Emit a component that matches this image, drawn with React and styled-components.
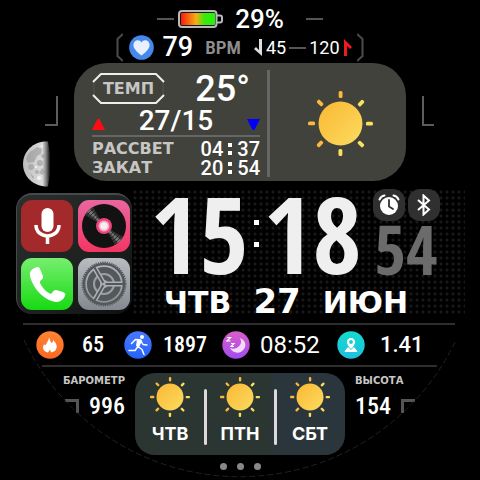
import React from "react";
import styled, { createGlobalStyle } from "styled-components";

const GlobalStyle = createGlobalStyle`
  * { box-sizing: border-box; }
  body { margin: 0; background: #000; }
  button { border: 0; padding: 0; cursor: pointer; font: inherit; color: inherit; }
  svg { display: block; flex: none; }
`;

const Face = styled.main`
  position: relative;
  display: flex;
  flex-direction: column;
  width: 100%;
  max-width: 560px;
  min-height: 100vh;
  margin: 0 auto;
  padding-top: 6px;
  overflow: hidden;
  color: #fff;
  font-family: Roboto, "Liberation Sans", sans-serif;
`;

const Rim = styled.svg`
  position: absolute;
  inset: 0;
  width: 100%;
  height: 100%;
  pointer-events: none;
`;

const Value = styled.span`
  font-family: ${(p) => (p.$narrow ? '"Roboto Condensed", ' : "")}Roboto, sans-serif;
  font-size: ${(p) => p.$size}px;
  font-weight: ${(p) => p.$weight || 500};
  line-height: 1;
  white-space: nowrap;
`;

const Label = styled.span`
  font-family: "DejaVu Sans", sans-serif;
  font-size: ${(p) => p.$size}px;
  font-weight: 700;
  line-height: 1;
  color: #c6c6c4;
`;

const Dash = styled.i`
  width: 17px;
  height: 2px;
  background: #555;
`;

const BatteryRow = styled.section`
  display: flex;
  justify-content: center;
  align-items: center;
  gap: 4px;
  height: 26px;
`;

const BatteryValue = styled(Value)`
  margin: 0 18px 0 8px;
`;

const PulseRow = styled.section`
  display: flex;
  justify-content: center;
  align-items: center;
  height: 31px;
`;

const PulseGroup = styled.div`
  display: flex;
  align-items: center;
  gap: ${(p) => p.$gap}px;
  margin: 0 ${(p) => p.$after}px 0 ${(p) => p.$before}px;
`;

const Unit = styled.span`
  font-family: "Roboto Condensed", Roboto, sans-serif;
  font-size: 19px;
  font-weight: 600;
  line-height: 1;
  color: #8e8e8e;
`;

const WeatherRow = styled.section`
  display: grid;
  grid-template-columns: minmax(0, 37fr) minmax(332px, 166fr) minmax(0, 37fr);
  height: 126px;
`;

const Side = styled.div`
  display: flex;
  flex-direction: column;
  justify-content: space-between;
  align-items: ${(p) => (p.$end ? "flex-end" : "flex-start")};
  padding: 33px 16px 2px;
`;

const Moon = styled.svg`
  align-self: center;
`;

const WeatherCard = styled.div`
  display: grid;
  grid-template-columns: 196px 1fr;
  height: 118px;
  border-radius: 33px;
  background: #42423c;
`;

const WeatherData = styled.div`
  display: flex;
  flex-direction: column;
  margin: 7px 0;
  padding: 0 7px 0 18px;
  border-right: 3px solid #666;
`;

const WeatherLine = styled.div`
  display: flex;
  align-items: center;
  justify-content: space-between;
  height: ${(p) => p.$height}px;
`;

const TempTag = styled.div`
  display: grid;
  width: 73px;
  height: 31px;
  place-items: center;
  & > * { grid-area: 1 / 1; }
`;

const Rule = styled.hr`
  width: 100%;
  height: 2px;
  margin: 1px 0 2px;
  border: 0;
  background: #666;
`;

const SunTime = styled.time`
  display: flex;
  align-items: center;
  gap: 5px;
`;

const Colon = styled.span`
  display: flex;
  flex-direction: column;
  gap: ${(p) => p.$gap}px;
  &::before, &::after {
    content: "";
    width: ${(p) => p.$dot}px;
    height: ${(p) => p.$dot}px;
    background: #fff;
  }
`;

const WeatherNow = styled.div`
  display: grid;
  place-items: center;
  padding-left: 4px;
`;

const MainRow = styled.section`
  display: grid;
  grid-template-columns: 116px 1fr;
  height: 126px;
  padding: 0 15px 0 16px;
`;

const Apps = styled.nav`
  display: grid;
  grid-template-columns: 52px 52px;
  grid-auto-rows: 52px;
  gap: 6px 5px;
  align-self: end;
  height: 121px;
  margin-bottom: 1px;
  padding: 5px 4px;
  border: solid #454a4a;
  border-width: 2px 0 0 1px;
  border-radius: 16px;
  background: linear-gradient(135deg, #2b302f, #1c201f 60%, #0e1010);
`;

const AppButton = styled.button`
  display: grid;
  place-items: center;
  border-radius: 11px;
  background: ${(p) => p.$fill};
`;

const Clock = styled.div`
  display: grid;
  grid-template-columns: minmax(0, 1fr) 68px;
  grid-template-rows: 88px 38px;
  padding-right: 25px;
  background: radial-gradient(circle, #191919 1px, transparent 2px) 0 0 / 6px 6px;
`;

const BigTime = styled.time`
  display: flex;
  align-items: center;
  justify-content: center;
  gap: 5px;
  height: 88px;
  padding-left: 8px;
`;

const BigDigits = styled.span`
  font-family: "Open Sans Condensed", "Roboto Condensed", sans-serif;
  font-size: ${(p) => p.$size}px;
  font-weight: 700;
  line-height: ${(p) => p.$line}px;
  color: ${(p) => p.$color};
`;

const DateLine = styled.div`
  grid-column: 1 / -1;
  display: flex;
  align-items: baseline;
  justify-content: center;
  gap: 22px;
`;

const DateText = styled.span`
  font-family: "DejaVu Sans", sans-serif;
  font-size: ${(p) => p.$size}px;
  font-weight: 700;
  line-height: 48px;
`;

const SecondsColumn = styled.div`
  display: flex;
  flex-direction: column;
  align-items: center;
`;

const StatusIcons = styled.div`
  display: flex;
  gap: 3px;
`;

const StatusButton = styled.button`
  display: grid;
  place-items: center;
  width: 32px;
  height: 32px;
  border-radius: 12px;
  background: #303030;
`;

const Separator = styled.hr`
  height: 2px;
  margin: ${(p) => p.$margin};
  border: 0;
  background: #2e2e2e;
`;

const Metrics = styled.section`
  display: grid;
  grid-template-columns: 88fr 98fr 115fr 100fr;
  align-items: center;
  height: 40px;
  padding: 0 43px 0 36px;
`;

const Metric = styled.div`
  display: flex;
  align-items: center;
  gap: ${(p) => p.$gap}px;
`;

const BottomRow = styled.section`
  display: grid;
  grid-template-columns: 1fr 210px 1fr;
  margin-top: 6px;
`;

const Gauge = styled.div`
  display: flex;
  flex-direction: column;
  align-items: ${(p) => (p.$end ? "flex-end" : "flex-start")};
  gap: 8px;
  padding: 3px 10px 0;
`;

const GaugeValue = styled.div`
  display: flex;
  align-items: center;
  gap: 10px;
`;

const Forecast = styled.div`
  display: grid;
  grid-template-columns: repeat(3, 1fr);
  height: 82px;
  border-radius: 20px;
  background: linear-gradient(90deg, #2b3531 0 62%, #2b363c 68%);
`;

const Day = styled.div`
  position: relative;
  display: flex;
  flex-direction: column;
  align-items: center;
  gap: 7px;
  padding-top: 4px;
  & + &::before {
    content: "";
    position: absolute;
    left: -1px;
    top: 16px;
    width: 3px;
    height: 56px;
    border-radius: 2px;
    background: #ddd8dc;
  }
`;

const DayName = styled.span`
  font-family: Inter, sans-serif;
  font-size: 18px;
  font-weight: 700;
  line-height: 20px;
`;

const Dots = styled.div`
  display: flex;
  justify-content: center;
  gap: 10px;
  padding-top: 8px;
`;

const Dot = styled.i`
  width: 7px;
  height: 7px;
  border-radius: 50%;
  background: #888;
`;

const TrendMark = styled.span`
  padding-top: 8px;
`;

const Sun = ({ size, id }) => (
  <svg width={size} height={size} viewBox="0 0 64 64">
    <defs>
      <linearGradient id={id} x1="0" y1="0" x2="1" y2="1">
        <stop offset="0" stopColor="#fbb733" />
        <stop offset="1" stopColor="#fbdc60" />
      </linearGradient>
    </defs>
    <circle cx="32" cy="32" r="21.6" fill={`url(#${id})`} />
    {[0, 45, 90, 135, 180, 225, 270, 315].map((a) => (
      <rect key={a} x="30.2" y="0" width="3.8" height="7" rx="1.5" transform={`rotate(${a} 32 32)`}
        fill={a > 20 && a < 200 ? "#fbe060" : "#fbb93a"} />
    ))}
  </svg>
);

const Battery = () => (
  <svg width="45" height="18" viewBox="0 0 45 18">
    <defs>
      <linearGradient id="charge">
        <stop offset="0" stopColor="#fa1b0b" />
        <stop offset=".45" stopColor="#f4b013" />
        <stop offset=".68" stopColor="#3ee80c" />
        <stop offset="1" stopColor="#1ff50a" />
      </linearGradient>
    </defs>
    <rect x="1" y="1" width="37.5" height="16" rx="3" fill="#171717" stroke="#bcb9bc" strokeWidth="2" />
    <rect x="3" y="3" width="34" height="12" rx="1" fill="url(#charge)" />
    <path d="M39 5.5h3q2 0 2 2v3q0 2-2 2h-3" fill="none" stroke="#bcb9bc" strokeWidth="2" />
  </svg>
);

const Bracket = ({ right }) => (
  <svg width="7" height="29" viewBox="0 0 7 29" fill="none" stroke="#4c4c4c" strokeWidth="2">
    <path d={right ? "M0 1l5.500 5v17L0 28" : "M7 1L1.500 6v17L7 28"} />
  </svg>
);

const HeartBadge = () => (
  <svg width="25" height="25" viewBox="0 0 25 25">
    <circle cx="12.500" cy="12.500" r="12.300" fill="#4689ed" />
    <path d="M12.500 20.500C8 17 4.400 13.800 4.400 10c0-5 6-6.300 8.100-2.600C14.600 3.700 20.600 5 20.600 10c0 3.800-3.600 7-8.100 10.500z" fill="#e8effd" />
  </svg>
);

const PulseArrow = ({ up }) => (
  <svg width="9" height="17" viewBox="0 0 9 17" fill={up ? "#f01b20" : "#ddd"}>
    <path d={up ? "M1 17V0l8 8-2 2-3-3v10z" : "M8 0v17L0 10l2-2 3 3V0z"} />
  </svg>
);

const Corner = ({ flip }) => (
  <svg width="13" height="31" viewBox="0 0 13 31" fill="none" stroke="#5c5c5c" strokeWidth="2">
    <path d={flip ? "M1 0v29h11" : "M12 0v29H0"} />
  </svg>
);

const MoonPhase = () => (
  <Moon width="30" height="46" viewBox="0 0 30 46">
    <defs>
      <linearGradient id="shade">
        <stop offset="0" stopColor="#bbb" />
        <stop offset=".7" stopColor="#ddd" />
        <stop offset=".86" stopColor="#777" />
        <stop offset="1" stopColor="#000" />
      </linearGradient>
    </defs>
    <path d="M26 .5C12-.5 1 10 1 23s11 23 25 22.500Q31 23 26 .5z" fill="url(#shade)" />
    <g fill="#8d8d8d" opacity=".5">
      <path d="M15 6l5 2-1 5-4 2-3 6-6 1-2-4q2-7 7-9z" />
      <circle cx="18" cy="22" r="3" /><circle cx="9" cy="26" r="3" />
      <circle cx="15" cy="31" r="2" /><circle cx="21" cy="15" r="2" />
      <path d="M20 27l3 3-2 4-4-2zM8 32l4 4-1 2z" />
    </g>
    <g fill="#f4f4f4"><circle cx="14" cy="26" r="1" /><circle cx="17" cy="37" r="2" /><circle cx="20" cy="5" r="1" /></g>
  </Moon>
);

const TagFrame = () => (
  <svg width="73" height="31" viewBox="0 0 73 31" fill="none" strokeWidth="2">
    <path d="M2 8v15M71 8v15" stroke="#4b4b45" />
    <path d="M1 9l8-8h55l8 8M1 22l8 8h55l8-8" stroke="#eee" />
  </svg>
);

const Triangle = ({ down }) => (
  <svg width="13" height="11" viewBox="0 0 13 11">
    <path d={down ? "M0 0h13L7.500 11h-2z" : "M0 11h13L7.500 0h-2z"} fill={down ? "#0000fa" : "#fc0d12"} />
  </svg>
);

const MicIcon = () => (
  <svg width="28" height="38" viewBox="0 0 28 38" fill="none" stroke="#fff" strokeWidth="3.500">
    <rect x="8.500" y="1" width="12" height="24" rx="6" fill="#fff" stroke="none" />
    <path d="M3 18c0 14.500 23 14.500 23 0M14.500 29v8" />
  </svg>
);

const VinylIcon = () => (
  <svg width="46" height="46" viewBox="0 0 46 46">
    <circle cx="23" cy="23" r="22" fill="#111" />
    <path d="M23 23L4 12A22 22 0 0 1 12 4zM23 23l19 11a22 22 0 0 1-8 8z" fill="#3c3c3c" />
    <path d="M23 23L6 9l3-3zM23 23l17 14-3 3z" fill="#777" />
    <g fill="none" stroke="#161616" strokeWidth=".8">
      <circle cx="23" cy="23" r="11" /><circle cx="23" cy="23" r="14" />
      <circle cx="23" cy="23" r="17" /><circle cx="23" cy="23" r="20" />
    </g>
    <circle cx="23" cy="23" r="8" fill="#e8437c" />
    <circle cx="23" cy="23" r="5.500" fill="#f7a5bf" />
    <circle cx="23" cy="23" r="3.800" fill="#f4eeee" />
  </svg>
);

const PhoneIcon = () => (
  <svg width="37" height="37" viewBox="0 0 37 37">
    <path d="M8 1C4 2 0 5 1 10c3 12 13 24 26 26 4 0 7-2 9-6 1-2 0-3-2-4l-7-2c-2 0-3 1-4 3-1 1-2 1-3 0-4-2-7-6-9-10 0-1 0-2 1-3 2-1 2-2 2-4L11 3C10 1 10 1 8 1z" fill="#fff" />
  </svg>
);

const SettingsIcon = () => (
  <svg width="46" height="46" viewBox="0 0 46 46" fill="none" stroke="#55585b">
    <circle cx="23" cy="23" r="20" strokeWidth="2.500" />
    <circle cx="23" cy="23" r="21.700" strokeWidth="1.500" strokeDasharray="1.200 1.070" />
    <circle cx="23" cy="23" r="14.500" strokeWidth="5" />
    <circle cx="23" cy="23" r="12" fill="#9ba0a5" strokeWidth="2" />
    <circle cx="23" cy="23" r="6.500" strokeWidth="5" />
    {[0, 120, 240].map((a) => (
      <g key={a} transform={`rotate(${a} 23 23)`}>
        <path d="M23 23H41" stroke="#aeb2b6" strokeWidth="5" />
        <path d="M23 23H42" strokeWidth="2" />
      </g>
    ))}
    <circle cx="23" cy="23" r="1.500" fill="#aeb2b6" stroke="none" />
  </svg>
);

const AlarmIcon = () => (
  <svg width="22" height="22" viewBox="0 0 22 22" fill="none" strokeLinecap="round">
    <circle cx="11" cy="12" r="9" fill="#fff" />
    <path d="M1.500 5.500Q3 2 6.500 1.500M20.500 5.500Q19 2 15.500 1.500" stroke="#fff" strokeWidth="2" />
    <path d="M11 6v6.500l4 2.500" stroke="#303030" strokeWidth="1.800" />
  </svg>
);

const BluetoothIcon = () => (
  <svg width="14" height="22" viewBox="0 0 14 22" fill="none" stroke="#fff" strokeWidth="2">
    <path d="M1 6l11 9.500-5.500 5V1.500l5.500 5L1 16" />
  </svg>
);

const Badge = ({ from, to, id, children }) => (
  <svg width="28" height="28" viewBox="0 0 28 28">
    <defs>
      <linearGradient id={id} x1="0" y1="0" x2="0" y2="1">
        <stop offset="0" stopColor={from} /><stop offset="1" stopColor={to} />
      </linearGradient>
    </defs>
    <circle cx="14" cy="14" r="13.700" fill={`url(#${id})`} />
    {children}
  </svg>
);

const GaugeCorner = ({ flip }) => (
  <svg width="14" height="14" viewBox="0 0 14 14" fill="none" stroke="#555" strokeWidth="3">
    <path d={flip ? "M1.500 14V1.500H14" : "M12.500 14V1.500H0"} />
  </svg>
);

const days = ["ЧТВ", "ПТН", "СБТ"];

export default function App() {
  return (
    <>
      <GlobalStyle />
      <Face>
        <Rim viewBox="0 0 480 480" preserveAspectRatio="xMidYMin meet" fill="none">
          <path d="M24 340A239 239 0 0 0 456 340" stroke="#222" strokeDasharray="6 3" />
        </Rim>

        <BatteryRow>
          <Dash />
          <Battery />
          <BatteryValue $size={26}>29%</BatteryValue>
          <Dash />
        </BatteryRow>

        <PulseRow>
          <Bracket />
          <PulseGroup $before={6} $after={12} $gap={8}>
            <HeartBadge />
            <Value $size={27}>79</Value>
          </PulseGroup>
          <Unit>BPM</Unit>
          <PulseGroup $before={13} $after={5} $gap={3}>
            <PulseArrow />
            <Value $size={18} $weight={400}>45</Value>
            <Dash />
            <Value $size={18} $weight={400}>120</Value>
            <PulseArrow up />
          </PulseGroup>
          <Bracket right />
        </PulseRow>

        <WeatherRow>
          <Side $end>
            <Corner />
            <MoonPhase />
          </Side>
          <WeatherCard>
            <WeatherData>
              <WeatherLine $height={37}>
                <TempTag>
                  <TagFrame />
                  <Label $size={16}>ТЕМП</Label>
                </TempTag>
                <PulseGroup $before={0} $after={10} $gap={0}>
                  <Value $size={36}>25°</Value>
                </PulseGroup>
              </WeatherLine>
              <WeatherLine $height={27}>
                <TrendMark><Triangle /></TrendMark>
                <Value $size={28}>27/15</Value>
                <TrendMark><Triangle down /></TrendMark>
              </WeatherLine>
              <Rule />
              {[["РАССВЕТ", "04", "37"], ["ЗАКАТ", "20", "54"]].map(([name, h, m]) => (
                <WeatherLine $height={19} key={name}>
                  <Label $size={16}>{name}</Label>
                  <SunTime>
                    <Value $size={20}>{h}</Value>
                    <Colon $gap={4} $dot={4} />
                    <Value $size={20}>{m}</Value>
                  </SunTime>
                </WeatherLine>
              ))}
            </WeatherData>
            <WeatherNow><Sun size={65} id="sun-now" /></WeatherNow>
          </WeatherCard>
          <Side><Corner flip /></Side>
        </WeatherRow>

        <MainRow>
          <Apps>
            <AppButton aria-label="Диктофон" $fill="#a3292a"><MicIcon /></AppButton>
            <AppButton aria-label="Музыка" $fill="linear-gradient(#e867a0, #f43562)"><VinylIcon /></AppButton>
            <AppButton aria-label="Телефон" $fill="linear-gradient(#77ee70, #17da12)"><PhoneIcon /></AppButton>
            <AppButton aria-label="Настройки" $fill="linear-gradient(#b9bdc1, #83898f)"><SettingsIcon /></AppButton>
          </Apps>
          <Clock>
            <BigTime>
              <BigDigits $size={106} $line={88} $color="#efefef">15</BigDigits>
              <Colon $gap={17} $dot={5} />
              <BigDigits $size={106} $line={88} $color="#efefef">18</BigDigits>
            </BigTime>
            <SecondsColumn>
              <StatusIcons>
                <StatusButton aria-label="Будильник"><AlarmIcon /></StatusButton>
                <StatusButton aria-label="Bluetooth"><BluetoothIcon /></StatusButton>
              </StatusIcons>
              <BigDigits $size={68} $line={56} $color="#6b6b6b">54</BigDigits>
            </SecondsColumn>
            <DateLine>
              <DateText $size={30}>ЧТВ</DateText>
              <DateText $size={34}>27</DateText>
              <DateText $size={30}>ИЮН</DateText>
            </DateLine>
          </Clock>
        </MainRow>

        <Separator $margin="8px 25px 0 23px" />
        <Metrics>
          <Metric $gap={18}>
            <Badge id="calories" from="#ff8433" to="#fb6822">
              <path d="M13 6c1 3 1 5 3 6 1-1 1-2 1-3 4 4 5 7 2 11l-4 1.500-1-3-2 3c-5-1-6-5-4-8 2 1 2 0 3-2 1-2 2-3 2-5.500z" fill="#fff" />
            </Badge>
            <Value $narrow $size={22}>65</Value>
          </Metric>
          <Metric $gap={11}>
            <Badge id="steps" from="#4779ff" to="#2562fb">
              <circle cx="18" cy="6" r="2" fill="#fff" />
              <path d="M17 9.500l-3 6 4 3 2 5M14 15.500l-3 4H5M16.500 9l-5-.500-4 4M17 10l2 3.500 4 .500" fill="none" stroke="#fff" strokeWidth="1.500" strokeLinecap="round" strokeLinejoin="round" />
              <path d="M13 8.500l5 1-3 7-3-1.500z" fill="#fff" />
            </Badge>
            <Value $narrow $size={22}>1897</Value>
          </Metric>
          <Metric $gap={10}>
            <Badge id="sleep" from="#da5ec8" to="#a24bf1">
              <path d="M18 7c5 2 7 7 4 11-3 5-11 5-14-1 3 1 6 1 8-1 3-2 4-5 2-9z" fill="#f4dcf8" />
              <path d="M5 6.500h3.500L5 10h3.500M9 12.500h3l-3 3h3" fill="none" stroke="#fff" strokeWidth="1.200" />
            </Badge>
            <Value $size={24} $weight={400}>08:52</Value>
          </Metric>
          <Metric $gap={15}>
            <Badge id="distance" from="#12dccb" to="#20bfe2">
              <path d="M8 20.500l3-4h6l3 4z" fill="#fff" stroke="#fff" strokeLinejoin="round" />
              <path d="M14 18.500c-3-3-4.500-5-4.500-7.500a4.500 4.500 0 0 1 9 0c0 2.500-1.500 4.500-4.500 7.500z" fill="#fff" stroke="#16cfd4" />
              <circle cx="14" cy="11" r="1.900" fill="#16cfd4" />
            </Badge>
            <Value $size={22}>1.41</Value>
          </Metric>
        </Metrics>
        <Separator $margin="0 43px 0 42px" />

        <BottomRow>
          <Gauge $end>
            <Label $size={10}>БАРОМЕТР</Label>
            <GaugeValue><GaugeCorner /><Value $narrow $size={24}>996</Value></GaugeValue>
          </Gauge>
          <Forecast>
            {days.map((name) => (
              <Day key={name}>
                <Sun size={40} id={`sun-${name}`} />
                <DayName>{name}</DayName>
              </Day>
            ))}
          </Forecast>
          <Gauge>
            <Label $size={10}>ВЫСОТА</Label>
            <GaugeValue><Value $narrow $size={24}>154</Value><GaugeCorner flip /></GaugeValue>
          </Gauge>
        </BottomRow>
        <Dots><Dot /><Dot /><Dot /></Dots>
      </Face>
    </>
  );
}
